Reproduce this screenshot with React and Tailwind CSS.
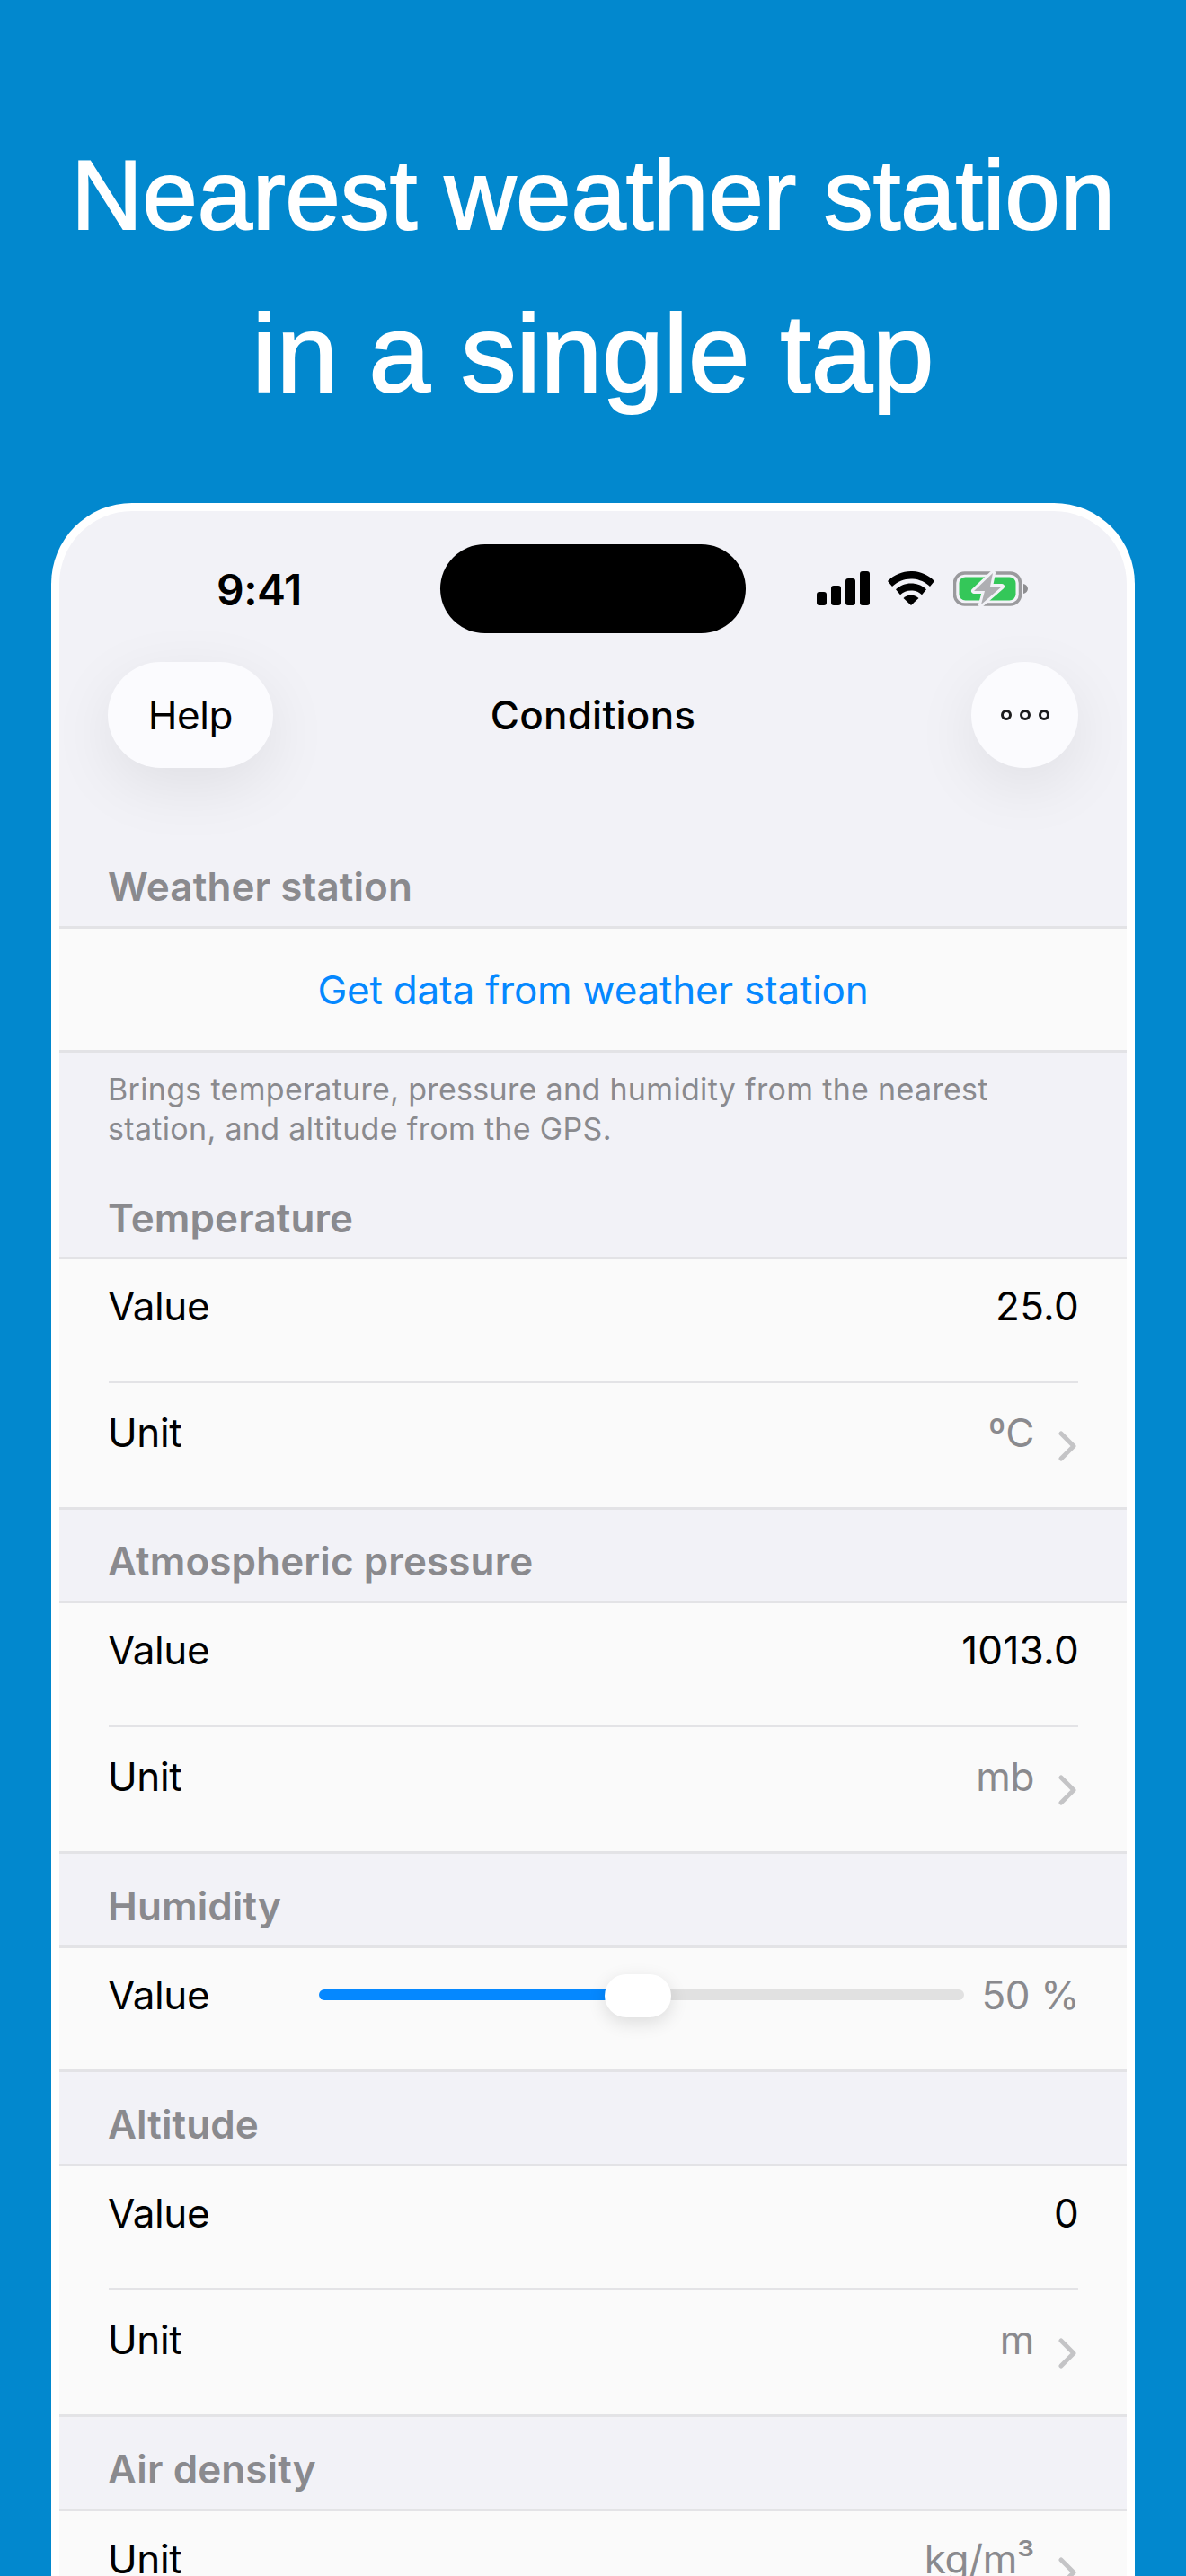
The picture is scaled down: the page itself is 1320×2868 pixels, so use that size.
const font = "font-['Inter','Liberation_Sans',sans-serif]";

function SignalIcon() {
  return (
    <svg width="59" height="38" viewBox="0 0 59 38" fill="#000">
      <rect x="0" y="23" width="11" height="15" rx="3" />
      <rect x="16" y="16" width="11" height="22" rx="3" />
      <rect x="32" y="8" width="11" height="30" rx="3" />
      <rect x="48" y="0" width="11" height="38" rx="3" />
    </svg>
  );
}

function WifiIcon() {
  return (
    <svg width="52" height="38" viewBox="0 0 52 38" fill="#000">
      <path d="M26 0C16 0 7 4 0 11l5 6c5.500-5.200 13-8.500 21-8.500S41.500 11.800 47 17l5-6C45 4 36 0 26 0z" />
      <path d="M26 13.500c-6.500 0-12.500 2.500-17 6.800l5 6c3-3 7.300-4.800 12-4.800s9 1.800 12 4.800l5-6c-4.500-4.300-10.500-6.800-17-6.800z" />
      <path d="M26 26.500c-3.300 0-6.300 1.300-8.500 3.500L26 38l8.500-8c-2.200-2.200-5.200-3.500-8.500-3.500z" />
    </svg>
  );
}

function BatteryIcon() {
  return (
    <svg width="83" height="39" viewBox="0 0 83 39">
      <rect x="1.500" y="2" width="73" height="35" rx="11" fill="none" stroke="#9a9a9d" strokeWidth="3.500" />
      <rect x="6.500" y="6.500" width="63" height="26" rx="7" fill="#34c759" />
      <path d="M78 14c3 .5 5 3 5 5.500s-2 5-5 5.500z" fill="#8e8e91" />
      <path d="M44 2 23 22h12l-4 15 23-20H41z" fill="#aeaeb2" stroke="#f2f2f7" strokeWidth="6" strokeLinejoin="round" paintOrder="stroke" />
    </svg>
  );
}

function Chevron() {
  return (
    <svg width="20" height="34" viewBox="0 0 20 34" fill="none" stroke="#c4c4c6" strokeWidth="5" strokeLinecap="round" strokeLinejoin="round">
      <path d="M3 3l14 14L3 31" />
    </svg>
  );
}

function SectionHeader({ title, short }) {
  return (
    <div className={`flex items-end border-b-[3px] border-[#e3e3e6] pb-[16px] pl-[54px] ${short ? "h-[104px]" : "h-[105px]"}`}>
      <span className="text-[44px] leading-[56px] font-semibold tracking-[0.1px] text-[#8a8a8e]">{title}</span>
    </div>
  );
}

function ValueRow({ value }) {
  return (
    <div className="flex h-[135px] justify-between pt-[24px] pr-[53px] pl-[54px]">
      <span className="text-[44px] leading-[56px] tracking-[-0.4px] text-black">Value</span>
      <span className="text-[44px] leading-[56px] tracking-[0.3px] text-black">{value}</span>
    </div>
  );
}

function UnitRow({ unit, compact }) {
  return (
    <div className={`flex h-[138px] items-start pr-[56px] pl-[54px] ${compact ? "pt-[25px]" : "pt-[27px]"}`}>
      <span className="flex-1 text-[44px] leading-[56px] tracking-[-0.4px] text-black">Unit</span>
      <span className="text-[44px] leading-[56px] tracking-[-0.4px] text-[#8a8a8e]">{unit}</span>
      <span className="mt-[26px] ml-[27px] flex">
        <Chevron />
      </span>
    </div>
  );
}

function ValueUnitGroup({ value, unit }) {
  return (
    <div className="border-b-[3px] border-[#e3e3e6] bg-[#fafafa]">
      <ValueRow value={value} />
      <div className="mr-[54px] ml-[55px] h-[3px] bg-[#e3e3e6]" />
      <UnitRow unit={unit} />
    </div>
  );
}

export default function App() {
  return (
    <div className={`h-[2868px] w-[1320px] overflow-hidden bg-[#0288ce] ${font}`}>
      <h1 className="pt-[128px] text-center font-['Liberation_Sans',sans-serif] leading-[177px] text-white">
        <span className="block text-[110px] [-webkit-text-stroke:2px_#fff]">Nearest weather station</span>
        <span className="block text-[123px] [-webkit-text-stroke:2px_#fff]">in a single tap</span>
      </h1>

      <div className="mx-[57px] mt-[78px] h-[2400px] rounded-t-[90px] bg-white px-[9px] pt-[9px]">
        <div className="h-full rounded-t-[81px] bg-[#f2f2f7]">
          {/* status bar */}
          <div className="flex h-[137px] items-start pt-[37px]">
            <span className="mt-[22px] w-[424px] pl-[175px] text-[48px] leading-[58px] font-semibold tracking-[-0.5px] text-black">9:41</span>
            <div className="h-[99px] w-[340px] rounded-[50px] bg-black" />
            <div className="mt-[30px] flex items-start pl-[79px]">
              <SignalIcon />
              <span className="ml-[20px] flex">
                <WifiIcon />
              </span>
              <span className="ml-[21px] flex">
                <BatteryIcon />
              </span>
            </div>
          </div>

          {/* nav bar */}
          <div className="mt-[31px] flex h-[118px] items-center px-[54px]">
            <div className="flex-1">
              <div className="flex h-[118px] w-[184px] items-center justify-center rounded-[59px] bg-[#fbfbfe] text-[44px] tracking-[-0.4px] text-black shadow-[0_20px_70px_rgba(0,0,0,0.08)]">
                Help
              </div>
            </div>
            <span className="text-[44px] font-medium tracking-[0.2px] text-black">Conditions</span>
            <div className="flex flex-1 justify-end">
              <div className="flex h-[118px] w-[119px] items-center justify-center gap-[9px] rounded-full bg-[#fbfbfe] shadow-[0_20px_70px_rgba(0,0,0,0.08)]">
                <span className="h-[12px] w-[12px] rounded-full border-[3px] border-[#1c1c1e]" />
                <span className="h-[12px] w-[12px] rounded-full border-[3px] border-[#1c1c1e]" />
                <span className="h-[12px] w-[12px] rounded-full border-[3px] border-[#1c1c1e]" />
              </div>
            </div>
          </div>

          <div className="h-[74px]" />
          <SectionHeader title="Weather station" />

          <div className="flex h-[138px] items-center justify-center border-b-[3px] border-[#e3e3e6] bg-[#fafafa]">
            <span className="text-[44px] tracking-[-0.2px] text-[#0588ff]">Get data from weather station</span>
          </div>

          <p className="px-[54px] pt-[19px] text-[34px] leading-[44px] tracking-[0.32px] text-[#8a8a8e]">
            Brings temperature, pressure and humidity from the nearest
            <br />
            station, and altitude from the GPS.
          </p>

          <div className="flex h-[123px] items-end border-b-[3px] border-[#e3e3e6] pb-[15px] pl-[54px]">
            <span className="text-[44px] leading-[56px] font-semibold tracking-[0.1px] text-[#8a8a8e]">Temperature</span>
          </div>
          <ValueUnitGroup value="25.0" unit="ºC" />

          <SectionHeader title="Atmospheric pressure" short />
          <ValueUnitGroup value="1013.0" unit="mb" />

          <SectionHeader title="Humidity" />
          <div className="flex h-[138px] items-start border-b-[3px] border-[#e3e3e6] bg-[#fafafa] pr-[53px] pl-[54px]">
            <span className="mt-[24px] w-[235px] text-[44px] leading-[56px] tracking-[-0.4px] text-black">Value</span>
            <div className="relative mt-[46px] flex h-[12px] w-[718px]">
              <div className="h-full w-[350px] rounded-l-full bg-[#0588ff]" />
              <div className="h-full flex-1 rounded-r-full bg-[#e1e1e1]" />
              <div className="absolute top-[-17px] left-[318px] h-[48px] w-[74px] rounded-[24px] bg-white shadow-[0_6px_20px_rgba(0,0,0,0.12)]" />
            </div>
            <span className="mt-[24px] flex-1 text-right text-[44px] leading-[56px] tracking-[-0.4px] text-[#8a8a8e]">50 %</span>
          </div>

          <SectionHeader title="Altitude" />
          <ValueUnitGroup value="0" unit="m" />

          <SectionHeader title="Air density" />
          <div className="bg-[#fafafa]">
            <UnitRow unit="kg/m³" compact />
          </div>
        </div>
      </div>
    </div>
  );
}
